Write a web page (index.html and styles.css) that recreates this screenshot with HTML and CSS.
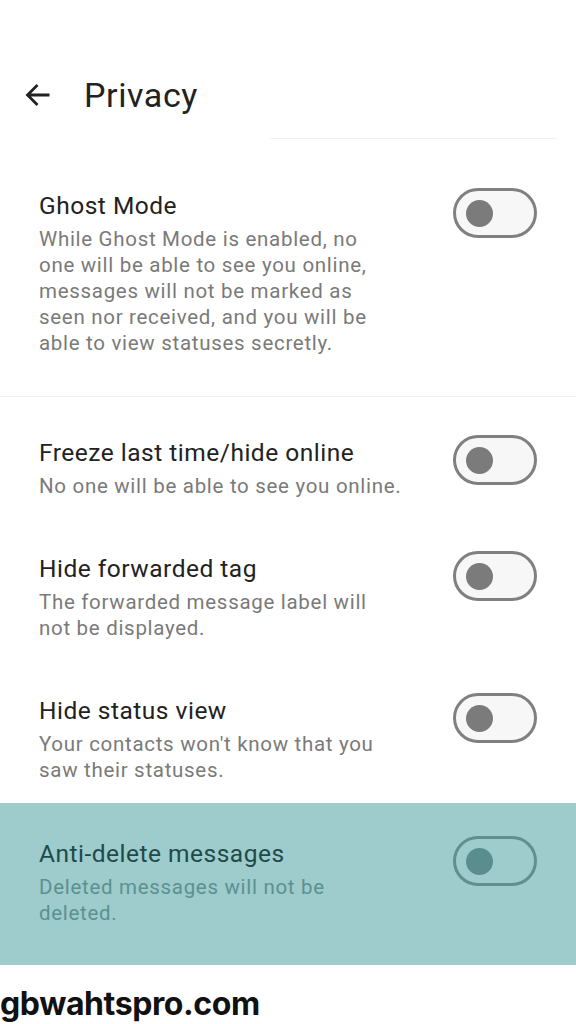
FILE: index.html
```html
<!DOCTYPE html>
<html lang="en">
<head>
<meta charset="utf-8">
<title>Privacy</title>
<link rel="stylesheet" href="styles.css">
</head>
<body>
<div class="screen">
  <header class="appbar">
    <svg class="back" width="26" height="24" viewBox="0 0 26 24" aria-hidden="true">
      <path d="M24.5 12H2.5M12.5 2L2.5 12l10 10" fill="none" stroke="#222" stroke-width="2.8" stroke-linecap="butt" stroke-linejoin="miter"/>
    </svg>
    <h1 class="title">Privacy</h1>
  </header>
  <div class="topline"></div>

  <section class="group group-ghost">
    <div class="row">
      <div class="text">
        <div class="label">Ghost Mode</div>
        <div class="desc">While Ghost Mode is enabled, no<br>one will be able to see you online,<br>messages will not be marked as<br>seen nor received, and you will be<br>able to view statuses secretly.</div>
      </div>
      <div class="switch"><span class="knob"></span></div>
    </div>
  </section>

  <div class="sep"></div>

  <section class="group group-main">
    <div class="row">
      <div class="text">
        <div class="label">Freeze last time/hide online</div>
        <div class="desc">No one will be able to see you online.</div>
      </div>
      <div class="switch"><span class="knob"></span></div>
    </div>
    <div class="row">
      <div class="text">
        <div class="label">Hide forwarded tag</div>
        <div class="desc">The forwarded message label will<br>not be displayed.</div>
      </div>
      <div class="switch"><span class="knob"></span></div>
    </div>
    <div class="row">
      <div class="text">
        <div class="label">Hide status view</div>
        <div class="desc">Your contacts won't know that you<br>saw their statuses.</div>
      </div>
      <div class="switch"><span class="knob"></span></div>
    </div>
  </section>

  <section class="group group-highlight">
    <div class="row">
      <div class="text">
        <div class="label">Anti-delete messages</div>
        <div class="desc">Deleted messages will not be<br>deleted.</div>
      </div>
      <div class="switch"><span class="knob"></span></div>
    </div>
  </section>

  <footer class="brand">gbwahtspro.com</footer>
</div>
</body>
</html>
```

FILE: styles.css
```css
* { box-sizing: border-box; }

html, body {
  margin: 0;
  padding: 0;
  background: #ffffff;
}

.screen {
  width: 576px;
  height: 1024px;
  overflow: hidden;
  font-family: Roboto, "Noto Sans", "Liberation Sans", sans-serif;
  color: #222222;
}

.appbar {
  display: flex;
  align-items: center;
  height: 40px;
  margin-top: 75px;
  padding-left: 25px;
}

.back {
  display: block;
  flex: none;
}

.title {
  margin: 0 0 0 33px;
  font-size: 34px;
  font-weight: 400;
  line-height: 40px;
  letter-spacing: 0.6px;
  color: #222222;
}

.topline {
  height: 1px;
  margin: 23px 20px 0 270px;
  background: #f1f1f1;
}

.group-ghost {
  padding: 51px 0 40px;
}

.sep {
  height: 1px;
  background: #f3f3f3;
}

.group-main {
  display: flex;
  flex-direction: column;
  gap: 54px;
  padding: 40px 0 20px;
}

.row {
  display: flex;
  align-items: flex-start;
  justify-content: space-between;
  padding: 0 39px;
}

.text {
  flex: 1;
  min-width: 0;
  white-space: nowrap;
}

.label {
  font-size: 24.5px;
  line-height: 32px;
  letter-spacing: 0.5px;
  color: #222222;
}

.desc {
  margin-top: 4px;
  font-size: 20.5px;
  line-height: 26px;
  letter-spacing: 0.7px;
  color: #7a7a7a;
}

.switch {
  flex: none;
  position: relative;
  width: 84px;
  height: 50px;
  margin-top: -2px;
  border: 3px solid #808080;
  border-radius: 25px;
  background: #f7f7f7;
}

.knob {
  position: absolute;
  left: 10px;
  top: 50%;
  width: 27px;
  height: 27px;
  margin-top: -13.5px;
  border-radius: 50%;
  background: #7b7b7b;
}

.group-highlight {
  background: #9ecbcb;
  padding: 35px 0 39px;
}

.group-highlight .label { color: #1f4a4a; }
.group-highlight .desc { color: #5b9191; }
.group-highlight .switch {
  border-color: #5f8f8f;
  background: #9ecbcb;
}
.group-highlight .knob { background: #5a8e8e; }

.brand {
  margin-top: 19px;
  font-family: Inter, Lato, "Liberation Sans", sans-serif;
  font-weight: 700;
  font-size: 32px;
  line-height: 40px;
  color: #111111;
  letter-spacing: -0.4px;
}
```
